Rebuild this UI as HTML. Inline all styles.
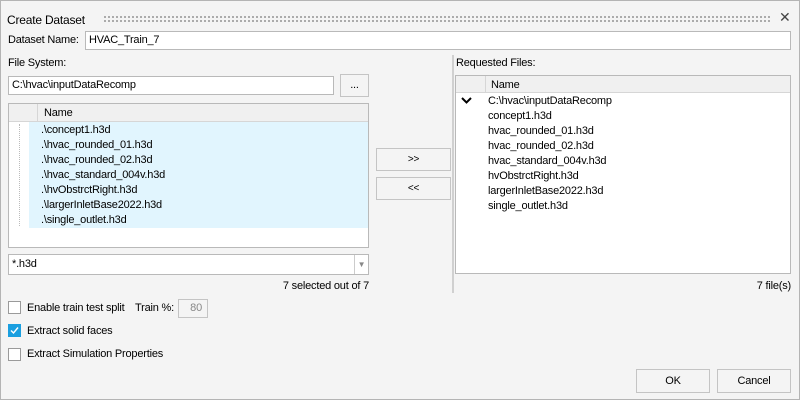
<!DOCTYPE html>
<html><head><style>
*{box-sizing:border-box;margin:0;padding:0}
body{width:800px;height:400px;background:#f4f4f4;font-family:"Liberation Sans",sans-serif;font-size:11px;letter-spacing:-0.2px;color:#000;position:relative;overflow:hidden}
.a{position:absolute}
.frame{left:0;top:0;width:800px;height:400px;border:1px solid #b4b4b4}
.inp{background:#fff;border:1px solid #b9b9b9;padding-left:3px;line-height:17px;white-space:nowrap}
.btn{background:#f4f4f4;border:1px solid #c4c4c4;text-align:center}
.hdr{background:#f0f0f0;border-bottom:1px solid #d6d6d6}
.row{position:absolute;white-space:nowrap;line-height:15px}
.cb{width:13px;height:13px;border:1px solid #9a9a9a;background:#fff}
</style></head><body>
<div class="a frame"></div>
<div class="a" style="left:7px;top:13px;font-size:12px">Create Dataset</div>
<div class="a" style="left:103px;top:15px;width:668px;height:7px;background-image:radial-gradient(circle,#999 0.9px,transparent 1.1px);background-size:4px 4px"></div>
<div class="a" style="left:779px;top:9px;font-size:14px;color:#444">✕</div>
<div class="a" style="left:8px;top:34px">Dataset Name:</div>
<div class="a inp" style="left:85px;top:31px;width:706px;height:19px">HVAC_Train_7</div>
<div class="a" style="left:8px;top:57px">File System:</div>
<div class="a inp" style="left:8px;top:76px;width:326px;height:19px">C:\hvac\inputDataRecomp</div>
<div class="a btn" style="left:340px;top:74px;width:29px;height:23px;line-height:20px">...</div>
<div class="a" style="left:8px;top:103px;width:361px;height:145px;background:#fff;border:1px solid #b9b9b9">
 <div class="a hdr" style="left:0;top:0;width:359px;height:18px"></div>
 <div class="a" style="left:28px;top:0;height:18px;border-left:1px solid #d6d6d6"></div>
 <div class="a" style="left:35px;top:3px">Name</div>
 <div class="a" style="left:20px;top:18px;width:339px;height:106px;background:#e1f5fe"></div>
 <div class="a" style="left:10px;top:20px;height:102px;border-left:1px dotted #bbb"></div>
 <div class="row" style="left:32px;top:19px">.\concept1.h3d</div>
 <div class="row" style="left:32px;top:34px">.\hvac_rounded_01.h3d</div>
 <div class="row" style="left:32px;top:49px">.\hvac_rounded_02.h3d</div>
 <div class="row" style="left:32px;top:64px">.\hvac_standard_004v.h3d</div>
 <div class="row" style="left:32px;top:79px">.\hvObstrctRight.h3d</div>
 <div class="row" style="left:32px;top:94px">.\largerInletBase2022.h3d</div>
 <div class="row" style="left:32px;top:109px">.\single_outlet.h3d</div>
</div>
<div class="a inp" style="left:8px;top:254px;width:361px;height:21px;line-height:19px">*.h3d</div>
<div class="a" style="left:354px;top:255px;width:14px;height:19px;border-left:1px solid #ccc;color:#888;font-size:8px;text-align:center;line-height:19px">▼</div>
<div class="a" style="left:200px;top:280px;width:169px;text-align:right">7 selected out of 7</div>
<div class="a btn" style="left:376px;top:148px;width:75px;height:23px;line-height:21px;font-size:10px">&gt;&gt;</div>
<div class="a btn" style="left:376px;top:177px;width:75px;height:23px;line-height:21px;font-size:10px">&lt;&lt;</div>
<div class="a" style="left:452px;top:55px;width:2px;height:238px;background:#d0d0d0"></div>
<div class="a" style="left:456px;top:57px">Requested Files:</div>
<div class="a" style="left:455px;top:75px;width:336px;height:199px;background:#fff;border:1px solid #b9b9b9">
 <div class="a hdr" style="left:0;top:0;width:334px;height:17px"></div>
 <div class="a" style="left:29px;top:0;height:17px;border-left:1px solid #d6d6d6"></div>
 <div class="a" style="left:35px;top:3px">Name</div>
 <svg class="a" style="left:5px;top:21px" width="12" height="8"><path d="M1 1 L5.5 5.5 L10 1" stroke="#000" stroke-width="2" fill="none"/></svg>
 <div class="row" style="left:32px;top:18px">C:\hvac\inputDataRecomp</div>
 <div class="row" style="left:32px;top:33px">concept1.h3d</div>
 <div class="row" style="left:32px;top:48px">hvac_rounded_01.h3d</div>
 <div class="row" style="left:32px;top:63px">hvac_rounded_02.h3d</div>
 <div class="row" style="left:32px;top:78px">hvac_standard_004v.h3d</div>
 <div class="row" style="left:32px;top:93px">hvObstrctRight.h3d</div>
 <div class="row" style="left:32px;top:108px">largerInletBase2022.h3d</div>
 <div class="row" style="left:32px;top:123px">single_outlet.h3d</div>
</div>
<div class="a" style="left:700px;top:280px;width:91px;text-align:right">7 file(s)</div>
<div class="a cb" style="left:8px;top:301px"></div>
<div class="a" style="left:27px;top:302px">Enable train test split</div>
<div class="a" style="left:135px;top:302px">Train %:</div>
<div class="a" style="left:178px;top:299px;width:30px;height:19px;border:1px solid #c4c4c4;color:#888;text-align:right;padding-right:5px;line-height:17px">80</div>
<div class="a" style="left:8px;top:324px;width:13px;height:13px;background:#1a9fe0"><svg width="13" height="13"><path d="M3 6.5 L5.5 9 L10 3.5" stroke="#fff" stroke-width="1.4" fill="none"/></svg></div>
<div class="a" style="left:27px;top:325px">Extract solid faces</div>
<div class="a cb" style="left:8px;top:348px"></div>
<div class="a" style="left:27px;top:348px">Extract Simulation Properties</div>
<div class="a btn" style="left:636px;top:369px;width:74px;height:24px;line-height:22px">OK</div>
<div class="a btn" style="left:717px;top:369px;width:74px;height:24px;line-height:22px">Cancel</div>
</body></html>
